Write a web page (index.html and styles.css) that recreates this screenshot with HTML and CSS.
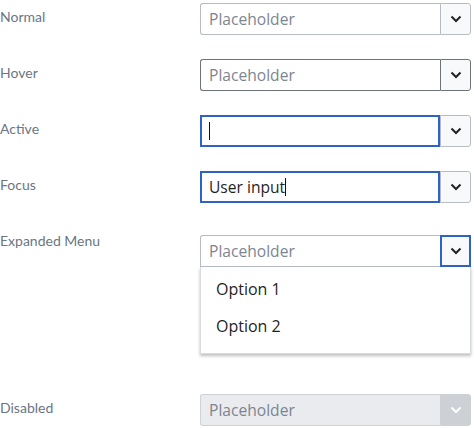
FILE: index.html
```html
<!DOCTYPE html>
<html>
<head>
<meta charset="utf-8">
<link rel="stylesheet" href="styles.css">
</head>
<body>
<div class="page">
  <div class="row r-normal">
    <div class="label">Normal</div>
    <div class="select">
      <div class="field"><span class="ph">Placeholder</span></div>
      <div class="btn"><svg width="12" height="8" viewBox="0 0 12 8"><path d="M1.5 1.5 L6 6 L10.5 1.5" fill="none" stroke="#222" stroke-width="2"/></svg></div>
    </div>
  </div>
  <div class="row">
    <div class="label">Hover</div>
    <div class="select hover">
      <div class="field"><span class="ph">Placeholder</span></div>
      <div class="btn"><svg width="12" height="8" viewBox="0 0 12 8"><path d="M1.5 1.5 L6 6 L10.5 1.5" fill="none" stroke="#222" stroke-width="2"/></svg></div>
    </div>
  </div>
  <div class="row">
    <div class="label">Active</div>
    <div class="select active">
      <div class="field"><span class="caret"></span></div>
      <div class="btn"><svg width="12" height="8" viewBox="0 0 12 8"><path d="M1.5 1.5 L6 6 L10.5 1.5" fill="none" stroke="#222" stroke-width="2"/></svg></div>
    </div>
  </div>
  <div class="row">
    <div class="label">Focus</div>
    <div class="select active">
      <div class="field"><span class="val">User input</span><span class="caret"></span></div>
      <div class="btn"><svg width="12" height="8" viewBox="0 0 12 8"><path d="M1.5 1.5 L6 6 L10.5 1.5" fill="none" stroke="#222" stroke-width="2"/></svg></div>
    </div>
  </div>
  <div class="row r-expanded">
    <div class="label">Expanded Menu</div>
    <div class="select-wrap">
      <div class="select expanded">
        <div class="field"><span class="ph">Placeholder</span></div>
        <div class="btn"><svg width="12" height="8" viewBox="0 0 12 8"><path d="M1.5 1.5 L6 6 L10.5 1.5" fill="none" stroke="#222" stroke-width="2"/></svg></div>
      </div>
      <div class="menu">
        <div class="opt">Option 1</div>
        <div class="opt">Option 2</div>
      </div>
    </div>
  </div>
  <div class="row r-disabled">
    <div class="label">Disabled</div>
    <div class="select disabled">
      <div class="field"><span class="ph">Placeholder</span></div>
      <div class="btn"><svg width="12" height="8" viewBox="0 0 12 8"><path d="M1.5 1.5 L6 6 L10.5 1.5" fill="none" stroke="#fff" stroke-width="2"/></svg></div>
    </div>
  </div>
</div>
</body>
</html>
```

FILE: styles.css
```css
html, body {
  margin: 0;
  padding: 0;
  background: #fff;
}
.page {
  display: flex;
  flex-direction: column;
  gap: 24px;
  padding-top: 3px;
}
.row {
  display: flex;
  align-items: flex-start;
}
.label {
  width: 200px;
  flex: none;
  font-family: Lato, sans-serif;
  font-size: 14px;
  line-height: 16px;
  color: #6b7684;
  padding-top: 6px;
}
.r-expanded {
  margin-top: 8px;
}
.r-expanded .label {
  margin-top: -8px;
}
.r-disabled {
  margin-top: 16px;
}
.select {
  width: 271px;
  height: 32px;
  display: flex;
  box-sizing: border-box;
  font-family: "Open Sans", sans-serif;
  font-size: 15.6px;
}
.field {
  flex: 1;
  border: 1px solid #b7bcc4;
  border-right: none;
  border-radius: 3px 0 0 3px;
  display: flex;
  align-items: center;
  padding-left: 8px;
  background: #fff;
}
.btn {
  width: 31px;
  flex: none;
  border: 1px solid #b7bcc4;
  border-radius: 0 3px 3px 0;
  background: #f8f9fa;
  display: flex;
  align-items: center;
  justify-content: center;
  box-sizing: border-box;
}
.ph {
  color: #7d8590;
}
.val {
  color: #1f1f1f;
}
.hover .field, .hover .btn {
  border-color: #6e737a;
}
.active .field {
  border: 2px solid #2f62c8;
  padding-left: 7px;
  border-radius: 0;
}
.caret {
  display: inline-block;
  width: 1px;
  height: 18px;
  background: #111;
}
.select-wrap {
  width: 271px;
  display: flex;
  flex-direction: column;
}
.expanded .btn {
  border: 2px solid #2f62c8;
  border-radius: 0;
}
.expanded .field {
  border-radius: 3px 0 0 0;
}
.menu {
  border: 1px solid #d8dbe0;
  border-top: none;
  box-shadow: 0 2px 3px rgba(0,0,0,0.25);
  padding: 4px 0 8px 0;
  font-family: "Open Sans", sans-serif;
  font-size: 16px;
  color: #1f1f1f;
}
.opt {
  height: 37px;
  line-height: 37px;
  padding-left: 15px;
}
.disabled .field {
  background: #e9ebee;
  border-color: #ced2d7;
}
.disabled .btn {
  background: #cdd1d6;
  border-color: #cdd1d6;
}
```
